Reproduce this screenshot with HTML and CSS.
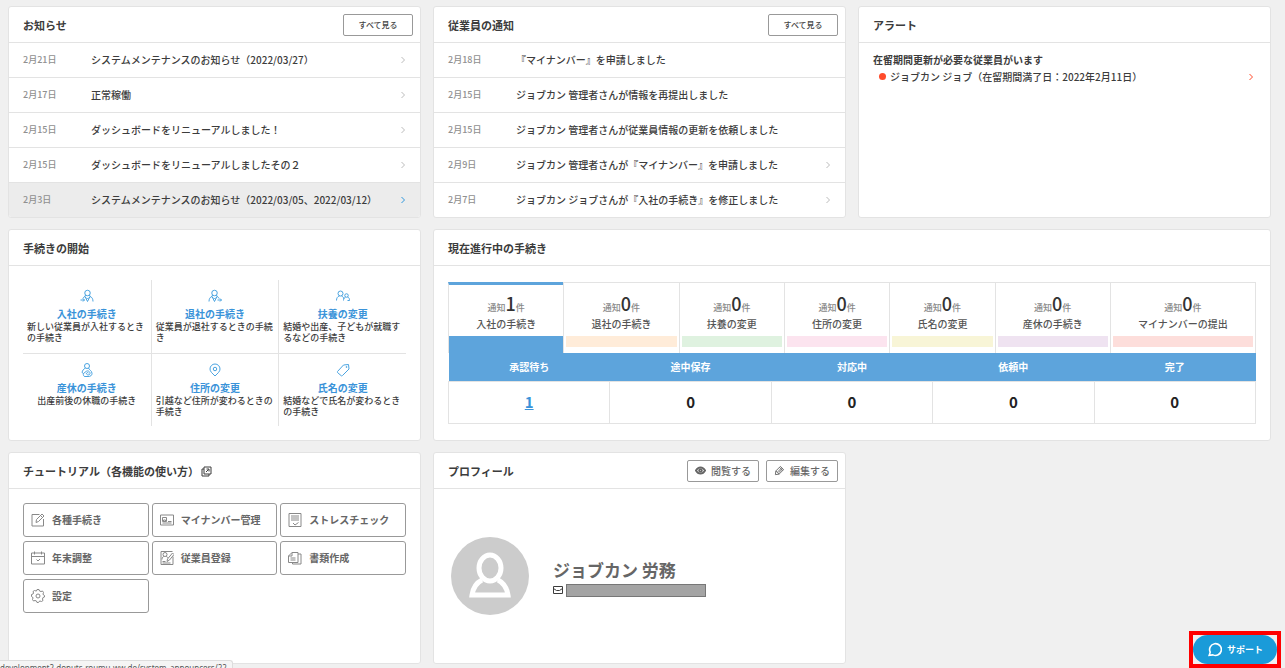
FILE: index.html
```html
<!DOCTYPE html>
<html lang="ja">
<head>
    <meta charset="UTF-8">
    <meta name="viewport" content="width=device-width, initial-scale=1">
    <title>ダッシュボード</title>
    <link rel="stylesheet" href="styles.css">
</head>
<body>
<svg class="symbols" aria-hidden="true">
    <symbol id="chevron" viewBox="0 0 6 8"><path d="M1.5 1l3 3-3 3"/></symbol>
</svg>
<main class="dashboard">
    <section class="card">
        <div class="card-head">
            <h2>お知らせ</h2>
            <button type="button" class="btn btn-all">すべて見る</button>
        </div>
        <ul class="news">
            <li><a href="#"><time>2月21日</time><span>システムメンテナンスのお知らせ（2022/03/27）</span><svg class="chevron"><use href="#chevron"/></svg></a></li>
            <li><a href="#"><time>2月17日</time><span>正常稼働</span><svg class="chevron"><use href="#chevron"/></svg></a></li>
            <li><a href="#"><time>2月15日</time><span>ダッシュボードをリニューアルしました！</span><svg class="chevron"><use href="#chevron"/></svg></a></li>
            <li><a href="#"><time>2月15日</time><span>ダッシュボードをリニューアルしましたその２</span><svg class="chevron"><use href="#chevron"/></svg></a></li>
            <li class="hover"><a href="#"><time>2月3日</time><span>システムメンテナンスのお知らせ（2022/03/05、2022/03/12）</span><svg class="chevron"><use href="#chevron"/></svg></a></li>
        </ul>
    </section>

    <section class="card">
        <div class="card-head">
            <h2>従業員の通知</h2>
            <button type="button" class="btn btn-all">すべて見る</button>
        </div>
        <ul class="news">
            <li><div><time>2月18日</time><span>『マイナンバー』を申請しました</span></div></li>
            <li><div><time>2月15日</time><span>ジョブカン 管理者さんが情報を再提出しました</span></div></li>
            <li><div><time>2月15日</time><span>ジョブカン 管理者さんが従業員情報の更新を依頼しました</span></div></li>
            <li><a href="#"><time>2月9日</time><span>ジョブカン 管理者さんが『マイナンバー』を申請しました</span><svg class="chevron"><use href="#chevron"/></svg></a></li>
            <li><a href="#"><time>2月7日</time><span>ジョブカン ジョブさんが『入社の手続き』を修正しました</span><svg class="chevron"><use href="#chevron"/></svg></a></li>
        </ul>
    </section>

    <section class="card">
        <div class="card-head">
            <h2>アラート</h2>
        </div>
        <div class="alert">
            <h3>在留期間更新が必要な従業員がいます</h3>
            <a href="#"><span>ジョブカン ジョブ（在留期間満了日：2022年2月11日）</span><svg class="chevron"><use href="#chevron"/></svg></a>
        </div>
    </section>

    <section class="card">
        <div class="card-head">
            <h2>手続きの開始</h2>
        </div>
        <div class="start">
            <a href="#">
                <svg viewBox="0 0 28 28"><circle cx="15" cy="8" r="5.5"/><path d="M11 12l-1 3 5 10 5-10-1-3M10 15c-3 1-4 3-4 4M20 15c4 1 6 5 6 10M12 17l3 3 3-3M1 22h8M6 19l3 3-3 3"/></svg>
                <strong>入社の手続き</strong>
                <span>新しい従業員が入社するときの手続き</span>
            </a>
            <a href="#">
                <svg viewBox="0 0 28 28"><circle cx="13" cy="8" r="5.5"/><path d="M9 12l-1 3 5 10 5-10-1-3M8 15c-4 1-6 5-6 10M18 15c3 1 4 3 4 4M10 17l3 3 3-3M19 22h8M24 19l3 3-3 3"/></svg>
                <strong>退社の手続き</strong>
                <span>従業員が退社するときの手続き</span>
            </a>
            <a href="#">
                <svg viewBox="0 0 28 28"><circle cx="9" cy="9" r="5"/><circle cx="21" cy="13" r="3.5"/><path d="M1 23c0-5 2-8 6-9M11 14c3 1 4 3 5 6M15 23c0-4 2-6 4-7M23 16c3 1 4 3 4 7h-4"/></svg>
                <strong>扶養の変更</strong>
                <span>結婚や出産、子どもが就職するなどの手続き</span>
            </a>
            <a href="#">
                <svg viewBox="0 0 28 28"><circle cx="14" cy="6" r="5"/><path d="M11 10c-4 2-6 5-7 9l3 2 5-4M17 10c1 4 7 5 7 11 0 4-3 6-8 6h-6c-3 0-4-3-3-6M12 17c4-3 8 0 8 4 0 3-5 4-7 1-1-2 2-4 4-2"/></svg>
                <strong>産休の手続き</strong>
                <span>出産前後の休職の手続き</span>
            </a>
            <a href="#">
                <svg viewBox="0 0 28 28"><path d="M14 26C8 20 4 17 4 12a10 10 0 0 1 20 0c0 5-4 8-10 14z"/><circle cx="14" cy="12" r="3.5"/></svg>
                <strong>住所の変更</strong>
                <span>引越など住所が変わるときの手続き</span>
            </a>
            <a href="#">
                <svg viewBox="0 0 28 28"><path d="M3 17L15 4l10-1 1 9-13 13c-1 1-2 1-3 0l-7-6c-1-1-1-1 0-2z"/><circle cx="21" cy="8" r="1"/></svg>
                <strong>氏名の変更</strong>
                <span>結婚などで氏名が変わるときの手続き</span>
            </a>
        </div>
    </section>

    <section class="card wide">
        <div class="card-head">
            <h2>現在進行中の手続き</h2>
        </div>
        <div class="progress">
            <div class="tabs" role="tablist">
                <button type="button" role="tab" aria-selected="true" class="tab selected"><span class="count">通知<b>1</b>件</span><span>入社の手続き</span></button>
                <button type="button" role="tab" class="tab orange"><span class="count">通知<b>0</b>件</span><span>退社の手続き</span></button>
                <button type="button" role="tab" class="tab green"><span class="count">通知<b>0</b>件</span><span>扶養の変更</span></button>
                <button type="button" role="tab" class="tab pink"><span class="count">通知<b>0</b>件</span><span>住所の変更</span></button>
                <button type="button" role="tab" class="tab yellow"><span class="count">通知<b>0</b>件</span><span>氏名の変更</span></button>
                <button type="button" role="tab" class="tab purple"><span class="count">通知<b>0</b>件</span><span>産休の手続き</span></button>
                <button type="button" role="tab" class="tab red"><span class="count">通知<b>0</b>件</span><span>マイナンバーの提出</span></button>
            </div>
            <table class="status">
                <thead>
                    <tr><th>承認待ち</th><th>途中保存</th><th>対応中</th><th>依頼中</th><th>完了</th></tr>
                </thead>
                <tbody>
                    <tr><td><a href="#">1</a></td><td>0</td><td>0</td><td>0</td><td>0</td></tr>
                </tbody>
            </table>
        </div>
    </section>

    <section class="card">
        <div class="card-head">
            <h2>チュートリアル（各機能の使い方）
                <svg class="external" viewBox="0 0 22 22"><path d="M6 2h14v14H6zM6 6H2v14h14v-4M10 12l5-5M11 6h5v5"/></svg>
            </h2>
        </div>
        <div class="tutorial">
            <a href="#"><svg viewBox="0 0 28 28"><path d="M17 3H2v23h23V12M10 19l1-6L22 2l4 4-11 11zM19 5l4 4"/></svg>各種手続き</a>
            <a href="#"><svg viewBox="0 0 28 28"><path d="M1 4h26v20H1zM5 9h8v8H5zM7 17v-3h4v3M16 17h7M5 20h18"/></svg>マイナンバー管理</a>
            <a href="#"><svg viewBox="0 0 28 28"><path d="M2 1h24v26H2zM6 6h16M6 10h16M6 14h16M10 20l4 4 7-5"/></svg>ストレスチェック</a>
            <a href="#"><svg viewBox="0 0 28 28"><path d="M1 4h26v22H1zM1 11h26M7 1v6M21 1v6M11 17l3 3 4-4"/></svg>年末調整</a>
            <a href="#"><svg viewBox="0 0 28 28"><path d="M26 11v16H2V1h23M4 17c0-4 2-6 4-6M12 11c2 0 3 1 4 3M14 21l1-5L25 4l3 3-9 11zM5 21h6M5 24h16"/><circle cx="10" cy="7" r="4"/></svg>従業員登録</a>
            <a href="#"><svg viewBox="0 0 28 28"><path d="M8 3h12v20H1V10zM8 3v7H1M20 6h6v20H9v-3M5 14h10M5 18h10"/></svg>書類作成</a>
            <a href="#"><svg viewBox="0 0 28 28"><path d="M11 4l1-3h4l1 3 3 1 3-1 2 3-1 3 1 2 2 1v3l-3 1-1 3 1 3-3 2-3-1-2 1-1 2h-3l-1-3-3-1-3 1-2-3 1-3-1-2-2-1v-4l3-1 1-2-1-3 3-2 3 1z"/><circle cx="14" cy="14" r="4"/></svg>設定</a>
        </div>
    </section>

    <section class="card">
        <div class="card-head">
            <h2>プロフィール</h2>
            <div class="actions">
                <button type="button" class="btn"><svg class="eye" viewBox="0 0 24 24"><path d="M2 12c5-9 15-9 20 0-5 9-15 9-20 0z"/><circle cx="12" cy="12" r="3"/></svg>閲覧する</button>
                <button type="button" class="btn"><svg viewBox="0 0 24 24"><path d="M3 21l1-8L14 3l7 7-10 10zM4 13l7 7M8 15l8-8M10 17l8-8M12 5l7 7"/></svg>編集する</button>
            </div>
        </div>
        <div class="profile">
            <svg class="avatar" viewBox="0 0 78 78"><circle cx="39" cy="39" r="39"/><path d="M31 43c-6 3-9 8-10 15h36c-1-7-4-12-10-15"/><ellipse cx="39" cy="31" rx="11" ry="13"/></svg>
            <div>
                <p class="name">ジョブカン 労務</p>
                <p class="mail"><svg viewBox="0 0 20 16"><path d="M1 1h18v14H1zM1 5l6 4h6l6-4"/></svg><span class="mask"></span></p>
            </div>
        </div>
    </section>
</main>

<div class="support">
    <button type="button"><svg viewBox="0 0 28 28"><path d="M4 25l2-6a11 11 0 1 1 5 5z"/></svg>サポート</button>
</div>
<div class="statusbar">development2.donuts-roumu-ww.de/system_announcers/22</div>
</body>
</html>
```
FILE: styles.css
```css
*{
    margin: 0;
    padding: 0;
    box-sizing: border-box;
}
body{
    background: #f0f0f0;
    color: #3c3c3c;
    font: 500 10px/14px "Noto Sans CJK JP", sans-serif;
}
ul{
    list-style: none;
}
a{
    color: inherit;
    text-decoration: none;
}
button{
    font: inherit;
    color: inherit;
    background: none;
    border: none;
    cursor: pointer;
}
svg{
    flex: none;
    fill: none;
    stroke: currentColor;
    stroke-width: 2;
}
.symbols{
    display: none;
}
.dashboard{
    display: grid;
    grid-template-columns: repeat(3, minmax(0, 1fr));
    grid-auto-rows: 1fr;
    gap: 11px 12px;
    padding: 6px 14px 0 8px;
}
.card{
    display: flex;
    flex-direction: column;
    background: #fff;
    border: 1px solid #e3e3e3;
    border-radius: 3px;
    overflow: hidden;
}
.wide{
    grid-column: span 2;
}
.card-head{
    display: flex;
    align-items: center;
    justify-content: space-between;
    height: 36px;
    padding: 0 7px 0 14px;
    border-bottom: 1px solid #e3e3e3;
}
h2{
    font-size: 11px;
    font-weight: bold;
}
.external{
    width: 11px;
    height: 11px;
    vertical-align: -1px;
}
.btn{
    display: flex;
    align-items: center;
    justify-content: center;
    gap: 5px;
    height: 22px;
    padding: 0 7px;
    color: #666;
    border: 1px solid #999;
    border-radius: 2px;
}
.btn svg{
    width: 11px;
    height: 11px;
}
.btn .eye{
    stroke-width: 4;
}
.btn-all{
    width: 70px;
    font-size: 8px;
    color: #444;
}
.actions{
    display: flex;
    gap: 7px;
}

/* お知らせ・通知 */
.news li{
    border-bottom: 1px solid #e3e3e3;
}
.news li:last-child{
    border-bottom: none;
}
.news a,
.news div{
    display: flex;
    align-items: center;
    height: 34px;
    padding: 0 14px;
}
.news time{
    width: 68px;
    font-size: 9px;
    color: #909090;
}
.news span{
    flex: 1;
    white-space: nowrap;
}
.chevron{
    width: 6px;
    height: 8px;
    color: #bbb;
    stroke-width: 1;
}
.news .hover{
    background: #ececec;
}
.hover .chevron{
    color: #2f97dd;
}

/* アラート */
.alert{
    padding: 8px 16px 14px 14px;
}
.alert h3{
    font-size: 10px;
    line-height: 17px;
}
.alert a{
    display: flex;
    align-items: center;
    line-height: 17px;
    padding-left: 6px;
}
.alert a:before{
    content: "";
    width: 7px;
    height: 7px;
    margin-right: 4px;
    border-radius: 50%;
    background: #ff4b2b;
}
.alert span{
    flex: 1;
}
.alert .chevron{
    color: #ff4b2b;
}

/* 手続きの開始 */
.start{
    display: grid;
    grid-template-columns: repeat(3, 1fr);
    padding: 14px;
}
.start a{
    display: flex;
    flex-direction: column;
    align-items: center;
    height: 73px;
    padding: 9px 4px 0;
    border-left: 1px solid #e3e3e3;
}
.start a:nth-child(3n+1){
    border-left: none;
}
.start a:nth-child(n+4){
    border-top: 1px solid #e3e3e3;
}
.start svg{
    width: 14px;
    height: 14px;
    margin-bottom: 4px;
    color: #4aa3e0;
}
.start strong{
    font-size: 10px;
    color: #3a93d9;
}
.start span{
    font-size: 9px;
    line-height: 11px;
}

/* 現在進行中の手続き */
.progress{
    padding: 16px 14px;
}
.tabs{
    display: flex;
    border-right: 1px solid #e3e3e3;
}
.tab{
    flex: 1 1 auto;
    display: flex;
    flex-direction: column;
    align-items: center;
    height: 71px;
    padding: 8px 2px 0;
    border-top: 1px solid #e3e3e3;
    border-left: 1px solid #e3e3e3;
    color: #555;
}
.tab .count{
    height: 26px;
    font-size: 9px;
    line-height: 26px;
    color: #888;
}
.count b{
    font-size: 18px;
    line-height: 24px;
    font-weight: 500;
    color: #333;
}
.tab:after{
    content: "";
    align-self: stretch;
    height: 11px;
    margin-top: 5px;
}
.tab.selected{
    padding-top: 6px;
    border-top: 3px solid #5da4dc;
}
.tab.selected:after{
    height: 17px;
    margin: 5px -2px 0;
    background: #5da4dc;
}
.orange:after{
    background: #ffecd9;
}
.green:after{
    background: #dff2e0;
}
.pink:after{
    background: #fce4ef;
}
.yellow:after{
    background: #f8f5d7;
}
.purple:after{
    background: #efe3f1;
}
.red:after{
    background: #fddedb;
}
.status{
    width: 100%;
    table-layout: fixed;
    border-collapse: collapse;
    text-align: center;
}
.status th{
    height: 28px;
    color: #fff;
    background: #5da4dc;
}
.status td{
    height: 42px;
    border: 1px solid #e3e3e3;
    font-size: 15px;
    font-weight: bold;
    color: #222;
}
.status a{
    color: #3a93d9;
    text-decoration: underline;
}

/* チュートリアル */
.tutorial{
    display: grid;
    grid-template-columns: repeat(3, 1fr);
    gap: 4px 3px;
    padding: 14px;
}
.tutorial a{
    display: flex;
    align-items: center;
    gap: 7px;
    height: 34px;
    padding-left: 7px;
    border: 1px solid #999;
    border-radius: 3px;
    font-weight: bold;
    color: #666;
}
.tutorial svg{
    width: 14px;
    height: 14px;
    color: #888;
}

/* プロフィール */
.profile{
    flex: 1;
    display: flex;
    align-items: center;
    gap: 24px;
    padding: 0 17px;
}
.avatar{
    width: 78px;
    height: 78px;
    stroke: #fff;
    stroke-width: 5;
}
.avatar circle{
    fill: #ccc;
    stroke: none;
}
.avatar ellipse{
    fill: #ccc;
}
.name{
    font-size: 17px;
    line-height: 28px;
    font-weight: bold;
    color: #666;
}
.mail{
    display: flex;
    align-items: center;
    gap: 3px;
}
.mail svg{
    width: 10px;
    height: 8px;
}
.mask{
    width: 140px;
    height: 13px;
    background: #a4a4a4;
    border: 1px solid #777;
}

.support{
    position: fixed;
    right: 4px;
    bottom: 0;
    border: 4px solid #f00;
}
.support button{
    display: flex;
    align-items: center;
    justify-content: center;
    gap: 5px;
    width: 84px;
    height: 29px;
    border-radius: 15px;
    background: #1a9bd9;
    color: #fff;
    font-size: 9px;
    font-weight: bold;
}
.support svg{
    width: 15px;
    height: 15px;
    stroke-width: 3;
}
.statusbar{
    position: fixed;
    left: 0;
    bottom: 0;
    height: 8px;
    padding-right: 5px;
    overflow: hidden;
    font: 8px/14px "Noto Sans", sans-serif;
    color: #555;
    background: #f5f5f5;
    border: 1px solid #ddd;
    border-width: 1px 1px 0 0;
    border-radius: 0 3px 0 0;
}
```
